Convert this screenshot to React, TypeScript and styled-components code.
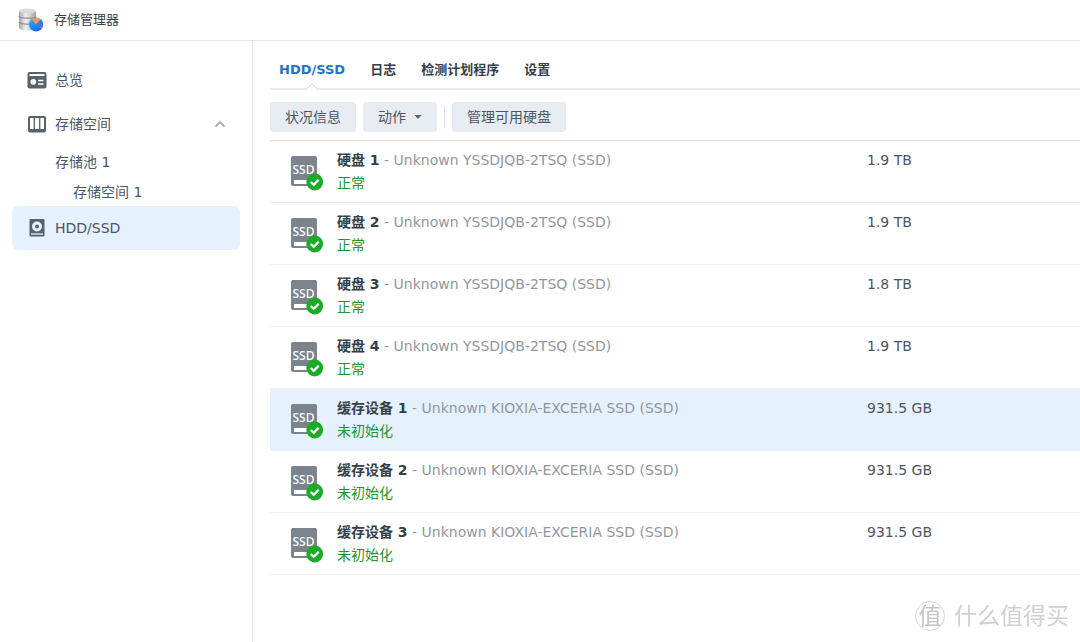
import React from "react";
import styled, { createGlobalStyle, css } from "styled-components";

const sans = `"DejaVu Sans", "Noto Sans CJK SC", sans-serif`;

const GlobalStyle = createGlobalStyle`
  *, *::before, *::after { box-sizing: border-box; }
  html, body, #root { height: 100%; }
  body {
    margin: 0;
    background: #fff;
    color: #4b555f;
    font: 14px/20px ${sans};
  }
  a { color: inherit; text-decoration: none; }
  button { font: inherit; color: inherit; border: 0; cursor: pointer; }
  svg { display: block; flex: none; }
`;

const Window = styled.div`
  display: flex;
  flex-direction: column;
  min-height: 100%;
`;

const TitleBar = styled.header`
  display: flex;
  align-items: center;
  gap: 10px;
  height: 41px;
  padding: 0 18px;
  border-bottom: 1px solid #e4e7ea;
`;

const Title = styled.h1`
  margin: 0;
  color: #353f49;
  font-size: 13px;
  font-weight: 400;
`;

const Body = styled.div`
  display: flex;
  flex: 1;
`;

const Sidebar = styled.nav`
  flex: 0 0 253px;
  padding: 17px 12px;
  border-right: 1px solid #e4e7ea;
`;

const NavLink = styled.a<{ $level?: number; $active?: boolean }>`
  display: flex;
  align-items: center;
  gap: 8px;
  height: 44px;
  padding: 0 15px;
  border-radius: 6px;
  ${(p) => p.$active && css`background: #e5f1fd;`}
  ${(p) =>
    p.$level &&
    css`
      height: 30px;
      padding-top: 2px;
      padding-left: ${p.$level === 1 ? 43 : 61}px;
    `}
`;

const NavLabel = styled.span`
  flex: 1;
`;

const Main = styled.main`
  flex: 1;
  min-width: 0;
  padding-left: 17px;
`;

const Tabs = styled.div`
  display: flex;
  gap: 25px;
  height: 49px;
  padding: 0 9px;
  border-bottom: 2px solid #e6eaed;
`;

const Tab = styled.button<{ $active?: boolean }>`
  position: relative;
  padding: 10px 0 0;
  background: none;
  color: #353f49;
  font-size: 13px;
  font-weight: 700;
  ${(p) =>
    p.$active &&
    css`
      color: #1f74c4;
      &::after {
        content: "";
        position: absolute;
        left: 50%;
        bottom: -7px;
        width: 10px;
        height: 10px;
        margin-left: -5px;
        background: #fff;
        border: solid #dde2e6;
        border-width: 1px 0 0 1px;
        transform: rotate(45deg);
      }
    `}
`;

const Toolbar = styled.div`
  display: flex;
  align-items: center;
  gap: 7px;
  height: 50px;
  padding-top: 4px;
`;

const ToolButton = styled.button`
  display: flex;
  align-items: center;
  gap: 8px;
  height: 30px;
  padding: 0 15px;
  border-radius: 3px;
  background: #e7ecf2;
`;

const Divider = styled.span`
  width: 1px;
  height: 22px;
  background: #d9dee3;
`;

const DriveTable = styled.table`
  width: 100%;
  border-collapse: separate;
  border-spacing: 0;
  table-layout: fixed;
  border-top: 1px solid #d9dde0;
`;

const IconCol = styled.col`
  width: 67px;
`;

const SizeCol = styled.col`
  width: 213px;
`;

const DriveRow = styled.tr<{ $selected?: boolean }>`
  height: 62px;
  ${(p) => p.$selected && css`background: #e5f1fd;`}
`;

const Cell = styled.td`
  padding: 8px 0 0;
  vertical-align: top;
  line-height: 23px;
  border-bottom: 1px solid #eceff1;
`;

const IconCell = styled(Cell)`
  padding: 13px 0 0 20px;
`;

const DriveLine = styled.div`
  color: #92979d;
  white-space: nowrap;
`;

const DriveName = styled.strong`
  color: #353f49;
`;

const DriveStatus = styled.div`
  color: #1f9430;
`;

const Watermark = styled.div`
  position: fixed;
  right: 11px;
  bottom: 9px;
  display: flex;
  align-items: center;
  gap: 9px;
  color: #d0d0d0;
  font-size: 23px;
  line-height: 34px;
`;

const WatermarkSeal = styled.span`
  display: flex;
  align-items: center;
  justify-content: center;
  width: 30px;
  height: 30px;
  border: 1px solid #d6d6d6;
  border-radius: 50%;
  color: #c4c4c4;
`;

function AppLogo() {
  return (
    <svg width="26" height="26" viewBox="0 0 26 26" aria-hidden="true">
      <defs>
        <linearGradient id="disk">
          <stop offset="0" stopColor="#a4a4a4" />
          <stop offset="0.4" stopColor="#f1f1f1" />
          <stop offset="1" stopColor="#a2a2a2" />
        </linearGradient>
        <linearGradient id="pie" x1="0" y1="0" x2="0.6" y2="1">
          <stop offset="0" stopColor="#1fc3f3" />
          <stop offset="1" stopColor="#2463ee" />
        </linearGradient>
      </defs>
      <path d="M1 4v16.500c0 4 17 4 17 0V4z" fill="url(#disk)" />
      <ellipse cx="9.500" cy="4" rx="8.500" ry="2.500" fill="#dadada" />
      <path d="M1 9c0 2.800 17 2.800 17 0M1 15c0 2.800 17 2.800 17 0" fill="none" stroke="#8a8a8a" strokeWidth="1.200" />
      <circle cx="18" cy="17.500" r="7" fill="url(#pie)" />
      <path d="M18 17.500L13.500 12a7 7 0 0 1 9.500 0.500z" fill="#f0955c" />
      <path d="M18 17.500l5-5a7 7 0 0 1 0 10z" fill="#3e76f2" />
    </svg>
  );
}

function OverviewIcon() {
  return (
    <svg width="20" height="20" viewBox="0 0 20 20" aria-hidden="true">
      <rect x="0.500" y="2" width="19" height="16.500" rx="2" fill="#57626d" />
      <rect x="2.500" y="4" width="15" height="2" fill="#fff" />
      <circle cx="6.300" cy="11.800" r="2.900" fill="#fff" />
      <path d="M11 10.500h5.500M11 14h5.500" stroke="#fff" strokeWidth="1.300" />
    </svg>
  );
}

function StorageIcon() {
  return (
    <svg width="20" height="20" viewBox="0 0 20 20" aria-hidden="true">
      <rect x="2" y="3" width="16" height="14.500" rx="1" fill="#fff" stroke="#57626d" strokeWidth="2" />
      <path d="M7.300 3v12M12.700 3v12" stroke="#57626d" strokeWidth="1.300" />
      <path d="M2 16.500h16" stroke="#57626d" strokeWidth="3" />
    </svg>
  );
}

function HddIcon() {
  return (
    <svg width="20" height="20" viewBox="0 0 20 20" aria-hidden="true">
      <rect x="2.500" y="1" width="15" height="17.500" rx="1" fill="#57626d" />
      <circle cx="10" cy="8.500" r="5" fill="#e5f1fd" />
      <circle cx="10" cy="8.500" r="2" fill="#57626d" />
      <path d="M4 16h12" stroke="#e5f1fd" strokeWidth="1.300" />
    </svg>
  );
}

function ChevronUp() {
  return (
    <svg width="10" height="8" viewBox="0 0 10 8" fill="none" stroke="#a6abb0" strokeWidth="1.800" aria-hidden="true">
      <path d="M0.500 6.500L5 2l4.500 4.500" />
    </svg>
  );
}

function SsdIcon() {
  return (
    <svg width="34" height="37" viewBox="0 0 34 37" role="img" aria-label="SSD">
      <rect x="1" y="2" width="26" height="30" rx="2" fill="#7b838c" />
      <text x="13.500" y="19.500" textAnchor="middle" fontFamily="Noto Sans, sans-serif" fontSize="12" fontWeight="500" fill="#fff">
        SSD
      </text>
      <rect x="4" y="26" width="14" height="4" fill="#fff" />
      <circle cx="24.700" cy="28" r="8.400" fill="#1bab28" />
      <path d="M20.800 28l2.900 2.800 5-5" fill="none" stroke="#fff" strokeWidth="2.300" />
    </svg>
  );
}

type Drive = { name: string; model: string; status: string; size: string; selected?: boolean };

const ssdModel = "Unknown YSSDJQB-2TSQ (SSD)";
const cacheModel = "Unknown KIOXIA-EXCERIA SSD (SSD)";

const drives: Drive[] = [
  { name: "硬盘 1", model: ssdModel, status: "正常", size: "1.9 TB" },
  { name: "硬盘 2", model: ssdModel, status: "正常", size: "1.9 TB" },
  { name: "硬盘 3", model: ssdModel, status: "正常", size: "1.8 TB" },
  { name: "硬盘 4", model: ssdModel, status: "正常", size: "1.9 TB" },
  { name: "缓存设备 1", model: cacheModel, status: "未初始化", size: "931.5 GB", selected: true },
  { name: "缓存设备 2", model: cacheModel, status: "未初始化", size: "931.5 GB" },
  { name: "缓存设备 3", model: cacheModel, status: "未初始化", size: "931.5 GB" },
];

const tabs = ["HDD/SSD", "日志", "检测计划程序", "设置"];

export default function App() {
  return (
    <Window lang="zh-CN">
      <GlobalStyle />
      <TitleBar>
        <AppLogo />
        <Title>存储管理器</Title>
      </TitleBar>
      <Body>
        <Sidebar>
          <NavLink href="#overview">
            <OverviewIcon />
            <NavLabel>总览</NavLabel>
          </NavLink>
          <NavLink href="#storage">
            <StorageIcon />
            <NavLabel>存储空间</NavLabel>
            <ChevronUp />
          </NavLink>
          <NavLink href="#pool-1" $level={1}>存储池 1</NavLink>
          <NavLink href="#volume-1" $level={2}>存储空间 1</NavLink>
          <NavLink href="#drives" $active aria-current="page">
            <HddIcon />
            <NavLabel>HDD/SSD</NavLabel>
          </NavLink>
        </Sidebar>
        <Main>
          <Tabs role="tablist">
            {tabs.map((t, i) => (
              <Tab key={t} role="tab" aria-selected={i === 0} $active={i === 0}>
                {t}
              </Tab>
            ))}
          </Tabs>
          <Toolbar>
            <ToolButton>状况信息</ToolButton>
            <ToolButton>
              动作
              <svg width="8" height="4" viewBox="0 0 8 4" aria-hidden="true">
                <path d="M0.500 0h7L4 4z" fill="#57626d" />
              </svg>
            </ToolButton>
            <Divider />
            <ToolButton>管理可用硬盘</ToolButton>
          </Toolbar>
          <DriveTable>
            <colgroup>
              <IconCol />
              <col />
              <SizeCol />
            </colgroup>
            <tbody>
              {drives.map((d) => (
                <DriveRow key={d.name} $selected={d.selected}>
                  <IconCell>
                    <SsdIcon />
                  </IconCell>
                  <Cell>
                    <DriveLine>
                      <DriveName>{d.name}</DriveName> - {d.model}
                    </DriveLine>
                    <DriveStatus>{d.status}</DriveStatus>
                  </Cell>
                  <Cell>{d.size}</Cell>
                </DriveRow>
              ))}
            </tbody>
          </DriveTable>
        </Main>
      </Body>
      <Watermark>
        <WatermarkSeal>值</WatermarkSeal>
        什么值得买
      </Watermark>
    </Window>
  );
}
